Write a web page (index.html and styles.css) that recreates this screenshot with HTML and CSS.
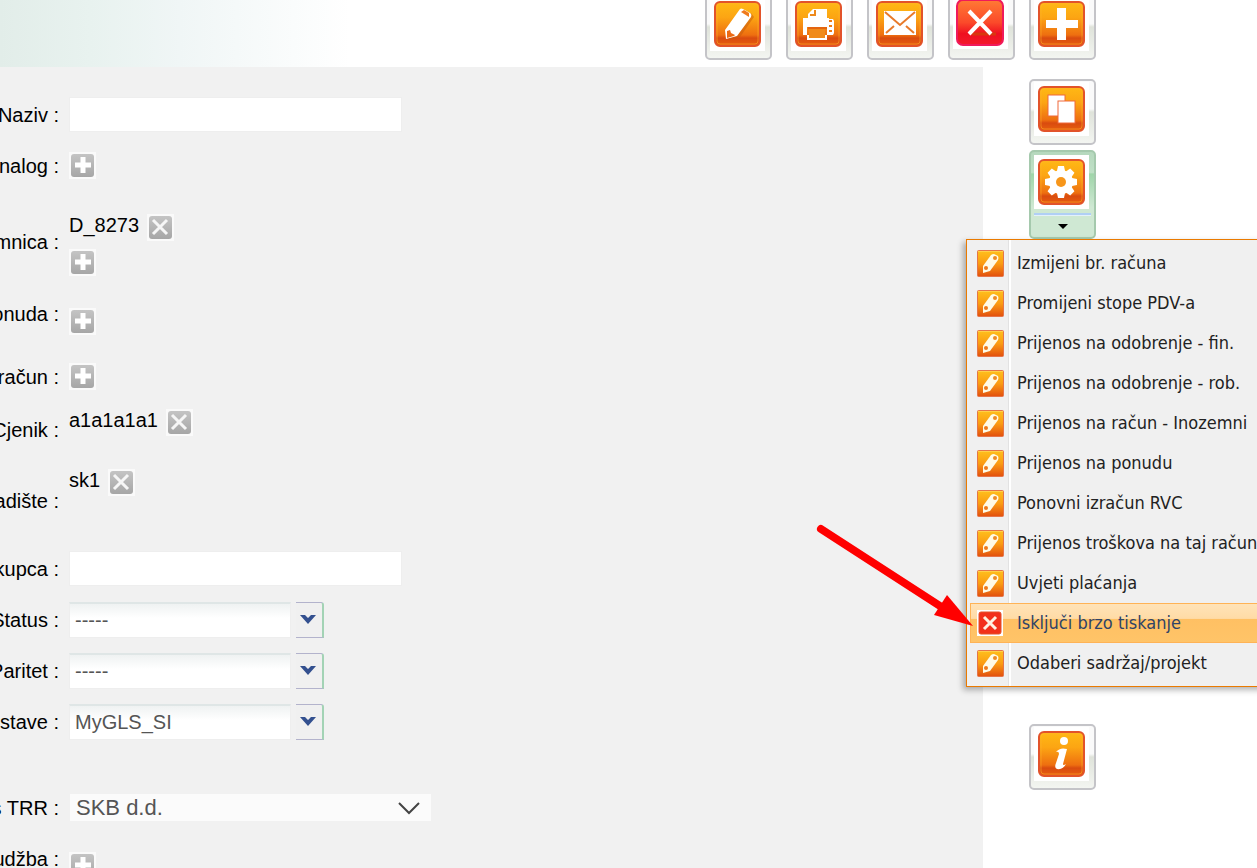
FILE: index.html
```html
<!DOCTYPE html>
<html lang="hr">
<head>
    <meta charset="UTF-8">
    <meta name="viewport" content="width=device-width, initial-scale=1.0">
    <title>Račun</title>
    <link rel="stylesheet" href="styles.css">
</head>
<body>

<svg class="sprite" aria-hidden="true">
    <defs>
        <linearGradient id="orange" x1="0" y1="0" x2="0" y2="1">
            <stop offset="0" stop-color="#ffb914"/>
            <stop offset="0.35" stop-color="#fca513"/>
            <stop offset="0.75" stop-color="#ee6f10"/>
            <stop offset="0.82" stop-color="#d94b0f"/>
            <stop offset="1" stop-color="#e8600f"/>
        </linearGradient>
        <linearGradient id="mini-orange" x1="0" y1="0" x2="0" y2="1">
            <stop offset="0" stop-color="#ffc01c"/>
            <stop offset="0.5" stop-color="#fb9c12"/>
            <stop offset="1" stop-color="#e2500e"/>
        </linearGradient>
        <linearGradient id="red" x1="0" y1="0" x2="0" y2="1">
            <stop offset="0" stop-color="#ff7a35"/>
            <stop offset="0.5" stop-color="#fb4a2a"/>
            <stop offset="0.75" stop-color="#ef1020"/>
            <stop offset="1" stop-color="#f31a2c"/>
        </linearGradient>
        <linearGradient id="gray" x1="0" y1="0" x2="0" y2="1">
            <stop offset="0" stop-color="#c4c4c4"/>
            <stop offset="1" stop-color="#a6a6a6"/>
        </linearGradient>
    </defs>
    <symbol id="tile" viewBox="0 0 55 54">
        <rect width="55" height="54" fill="#fff"/>
        <rect x="5" y="5" width="45" height="44" rx="5" fill="url(#orange)" stroke="#e2532a" stroke-width="2"/>
        <rect x="7" y="7" width="41" height="40" rx="3" fill="none" stroke="#ffb52e" stroke-opacity="0.5"/>
    </symbol>
    <symbol id="pencil" viewBox="0 0 55 54">
        <path d="M18 43 L30 40 L44 20 L41 16 Z" fill="#c65a0c" opacity="0.5"/>
        <path d="M16 42 L15 33 L30 12 Q31 11 33 12 L40 16 Q42 17 41 20 L27 39 Z" fill="#fff"/>
        <path d="M31 15 L34 13 L39 16 L39 20 Z" fill="#ef7a1c"/>
        <path d="M17 34 L20 33 L21 36 L25 38 L24 39 L17 41 Z" fill="#ec6a14"/>
    </symbol>
    <symbol id="mini-pencil" viewBox="0 0 27 27">
        <rect x="0.5" y="0.5" width="26" height="26" rx="1" fill="url(#mini-orange)" stroke="#e5754a"/>
        <path d="M1 1.5 H26" stroke="#ffd04a"/>
        <path d="M6 23 L6 16 L14 5 Q15 4 17 4 L21 6 Q22 8 21 10 L13 21 Z" fill="#fffbe6"/>
        <circle cx="18" cy="8" r="2" fill="#ef8a24"/>
        <circle cx="9" cy="18" r="2" fill="#ef7a1c"/>
    </symbol>
    <symbol id="mini-cross" viewBox="0 0 27 27">
        <rect width="26" height="26" fill="#fff"/>
        <rect x="2" y="2" width="22" height="22" rx="2" fill="#f2301a" stroke="#e2532a"/>
        <path d="M7 7 L19 19 M19 7 L7 19" stroke="#fff0e0" stroke-width="3"/>
    </symbol>
    <symbol id="add" viewBox="0 0 27 27">
        <rect width="27" height="27" fill="#fafafa"/>
        <rect x="2" y="2" width="23" height="23" rx="3" fill="url(#gray)"/>
        <path d="M14 5 V21 M6 13 H22" stroke="#fff" stroke-width="5"/>
    </symbol>
    <symbol id="remove" viewBox="0 0 27 27">
        <rect width="27" height="27" fill="#fafafa"/>
        <rect x="2" y="2" width="23" height="23" rx="3" fill="url(#gray)"/>
        <path d="M6 6 L20 20 M20 6 L6 20" stroke="#f6f6f6" stroke-width="3"/>
    </symbol>
    <symbol id="chevron" viewBox="0 0 16 10">
        <path d="M0 0 H5 L8 3 L11 0 H16 L8 9 Z" fill="#33508f"/>
    </symbol>
</svg>

<header class="header">
    <div class="toolbar">
        <button class="tool" type="button" aria-label="Uredi">
            <svg width="55" height="54"><use href="#tile"/><use href="#pencil"/></svg>
        </button>
        <button class="tool" type="button" aria-label="Ispis">
            <svg width="55" height="54">
                <use href="#tile"/>
                <path d="M17 21 V17 L22 12 H36 V21 Z" fill="#fff"/>
                <path d="M19 18 H24 V13" fill="none" stroke="#ee8a1c" stroke-width="2"/>
                <path d="M12 21 H38 V38 H12 Z M16 30 V43 H36 V30 Z M38 22 H42 L43 24 V36 L42 38 H38 Z" fill="#fff"/>
                <rect x="18" y="31" width="16" height="10" fill="#f08a1a"/>
                <path d="M17 31 H36" stroke="#e4650f" stroke-width="2"/>
                <path d="M38 24 H41 M38 29 H41 M38 34 H41" stroke="#ee7a14" stroke-width="2"/>
            </svg>
        </button>
        <button class="tool" type="button" aria-label="E-mail">
            <svg width="55" height="54">
                <use href="#tile"/>
                <rect x="12" y="14" width="32" height="24" fill="#fff"/>
                <path d="M13 15 L28 28 L43 15 M14 36 L22 29 M42 36 L34 29" fill="none" stroke="#e87a2a" stroke-width="2"/>
            </svg>
        </button>
        <button class="tool" type="button" aria-label="Obriši">
            <svg width="55" height="54">
                <rect width="55" height="52" fill="#fff"/>
                <rect x="4" y="3" width="46" height="45" rx="6" fill="url(#red)" stroke="#f01a5a" stroke-width="2"/>
                <path d="M19 37 H43" stroke="#d8380f" stroke-width="3"/>
                <path d="M16 14 L38 37 M38 14 L16 37" stroke="#fff" stroke-width="4"/>
            </svg>
        </button>
        <button class="tool" type="button" aria-label="Dodaj">
            <svg width="55" height="54">
                <use href="#tile"/>
                <path d="M23 11 H32 V23 H44 V31 H32 V43 H23 V31 H12 V23 H23 Z" fill="#fff"/>
            </svg>
        </button>
    </div>
</header>

<main class="main">
    <form class="panel">
        <div class="row">
            <label for="naziv">Naziv :</label>
            <input class="text" id="naziv" type="text">
        </div>
        <div class="row">
            <span class="label">nalog :</span>
            <button class="icon" type="button" aria-label="Dodaj nalog"><svg width="27" height="27"><use href="#add"/></svg></button>
        </div>
        <div class="row row-double">
            <span class="label">mnica :</span>
            <div class="value">
                <div class="linked">
                    <span>D_8273</span>
                    <button class="icon" type="button" aria-label="Ukloni D_8273"><svg width="27" height="27"><use href="#remove"/></svg></button>
                </div>
                <button class="icon" type="button" aria-label="Dodaj"><svg width="27" height="27"><use href="#add"/></svg></button>
            </div>
        </div>
        <div class="row row-offer">
            <span class="label">onuda :</span>
            <div class="low">
                <button class="icon" type="button" aria-label="Dodaj ponudu"><svg width="27" height="27"><use href="#add"/></svg></button>
            </div>
        </div>
        <div class="row">
            <span class="label">račun :</span>
            <button class="icon" type="button" aria-label="Dodaj račun"><svg width="27" height="27"><use href="#add"/></svg></button>
        </div>
        <div class="row row-price">
            <span class="label">Cjenik :</span>
            <div class="value">
                <div class="linked">
                    <span>a1a1a1a1</span>
                    <button class="icon" type="button" aria-label="Ukloni a1a1a1a1"><svg width="27" height="27"><use href="#remove"/></svg></button>
                </div>
            </div>
        </div>
        <div class="row row-store">
            <span class="label">adište :</span>
            <div class="value">
                <div class="linked">
                    <span>sk1</span>
                    <button class="icon" type="button" aria-label="Ukloni sk1"><svg width="27" height="27"><use href="#remove"/></svg></button>
                </div>
            </div>
        </div>
        <div class="row">
            <label for="kupca">kupca :</label>
            <input class="text" id="kupca" type="text">
        </div>
        <div class="row">
            <label for="status">Status :</label>
            <div class="combo">
                <input id="status" type="text" value="-----">
                <button type="button" aria-label="Otvori"><svg width="16" height="10"><use href="#chevron"/></svg></button>
            </div>
        </div>
        <div class="row">
            <label for="paritet">Paritet :</label>
            <div class="combo">
                <input id="paritet" type="text" value="-----">
                <button type="button" aria-label="Otvori"><svg width="16" height="10"><use href="#chevron"/></svg></button>
            </div>
        </div>
        <div class="row">
            <label for="dostava">stave :</label>
            <div class="combo">
                <input id="dostava" type="text" value="MyGLS_SI">
                <button type="button" aria-label="Otvori"><svg width="16" height="10"><use href="#chevron"/></svg></button>
            </div>
        </div>
        <div class="row row-bank">
            <label for="trr">s TRR :</label>
            <div class="select">
                <select id="trr">
                    <option>SKB d.d.</option>
                </select>
                <svg width="22" height="14"><path d="M1 2 L11 12 L21 2" fill="none" stroke="#444" stroke-width="2"/></svg>
            </div>
        </div>
        <div class="row">
            <span class="label">udžba :</span>
            <div class="low">
                <button class="icon" type="button" aria-label="Dodaj narudžbu"><svg width="27" height="27"><use href="#add"/></svg></button>
            </div>
        </div>
    </form>

    <aside class="side">
        <button class="tool" type="button" aria-label="Kopiraj">
            <svg width="55" height="54">
                <use href="#tile"/>
                <rect x="14" y="13" width="17" height="21" fill="#fff" stroke="#f0683a"/>
                <rect x="24" y="19" width="17" height="22" fill="#fff" stroke="#f0683a"/>
            </svg>
        </button>
        <div class="dropdown">
            <button class="tool tool-open" type="button" aria-label="Radnje" aria-expanded="true">
                <svg width="55" height="54">
                    <use href="#tile"/>
                    <g transform="translate(27 27)" fill="#fff">
                        <circle r="12"/>
                        <path id="tooth" d="M-4 -11 L-3 -16 H3 L4 -11 V11 L3 16 H-3 L-4 11 Z"/>
                        <use href="#tooth" transform="rotate(45)"/>
                        <use href="#tooth" transform="rotate(90)"/>
                        <use href="#tooth" transform="rotate(135)"/>
                        <circle r="5" fill="#f7961a"/>
                    </g>
                </svg>
                <span class="split"></span>
                <svg class="caret" width="10" height="5"><path d="M0 0 H10 L5 5 Z"/></svg>
            </button>
            <div class="menu">
                <button type="button"><svg width="27" height="27"><use href="#mini-pencil"/></svg>Izmijeni br. računa</button>
                <button type="button"><svg width="27" height="27"><use href="#mini-pencil"/></svg>Promijeni stope PDV-a</button>
                <button type="button"><svg width="27" height="27"><use href="#mini-pencil"/></svg>Prijenos na odobrenje - fin.</button>
                <button type="button"><svg width="27" height="27"><use href="#mini-pencil"/></svg>Prijenos na odobrenje - rob.</button>
                <button type="button"><svg width="27" height="27"><use href="#mini-pencil"/></svg>Prijenos na račun - Inozemni</button>
                <button type="button"><svg width="27" height="27"><use href="#mini-pencil"/></svg>Prijenos na ponudu</button>
                <button type="button"><svg width="27" height="27"><use href="#mini-pencil"/></svg>Ponovni izračun RVC</button>
                <button type="button"><svg width="27" height="27"><use href="#mini-pencil"/></svg>Prijenos troškova na taj račun</button>
                <button type="button"><svg width="27" height="27"><use href="#mini-pencil"/></svg>Uvjeti plaćanja</button>
                <button type="button" class="active"><svg width="27" height="27"><use href="#mini-cross"/></svg>Isključi brzo tiskanje</button>
                <button type="button"><svg width="27" height="27"><use href="#mini-pencil"/></svg>Odaberi sadržaj/projekt</button>
                <svg class="arrow" width="160" height="106">
                    <path d="M5 5 L124 82" stroke="#f00" stroke-width="8" stroke-linecap="round"/>
                    <path d="M131 71 L157 102 L118 91 Z" fill="#f00"/>
                </svg>
            </div>
        </div>
        <button class="tool tool-info" type="button" aria-label="Info">
            <svg width="55" height="54">
                <use href="#tile"/>
                <circle cx="30" cy="14" r="4" fill="#fff"/>
                <path d="M22 25 Q26 20 33 22 L29 37 Q29 39 32 37 Q29 43 23 42 Q20 41 22 36 L25 27 Q25 24 22 25 Z" fill="#fff"/>
            </svg>
        </button>
    </aside>
</main>

</body>
</html>
```

FILE: styles.css
```css
* {
    box-sizing: border-box;
}
body {
    font-family: Arial, "Liberation Sans", sans-serif;
    font-size: 20px;
    line-height: 22px;
    color: #000;
    background: #fff;
    margin: 0;
    height: 100vh;
    overflow: hidden;
}
button, input, select {
    font: inherit;
    margin: 0;
}
button {
    cursor: pointer;
}
svg {
    display: block;
    flex: none;
}
.sprite {
    position: absolute;
    width: 0;
    height: 0;
}

/* top bar */
.header {
    height: 67px;
    background: linear-gradient(to right, #e2ede9, #e8f2ef 90px, #f0f6f6 180px, #fff 350px);
}
.toolbar {
    display: flex;
    justify-content: flex-end;
    gap: 14px;
    padding-right: 161px;
    margin-top: -6px;
    float: right;
}
.tool {
    display: block;
    width: 67px;
    height: 66px;
    padding: 1px 2px 3px 3px;
    border: 2px solid #c4c4c8;
    border-radius: 5px;
    background: linear-gradient(#fafafa 45%, #dfe3da 50%, #f3f5f1);
}
.tool > svg {
    margin-bottom: 4px;
}

/* form */
.main {
    display: flex;
}
.panel {
    flex: 1;
    padding-top: 22px;
    background: #f1f1f1;
}
.row {
    display: flex;
    align-items: center;
    gap: 10px;
    height: 51px;
}
.row label, .row .label {
    display: flex;
    justify-content: flex-end;
    width: 59px;
    white-space: nowrap;
}
.row-double {
    height: 70px;
    margin-top: 16px;
}
.row-offer {
    height: 74px;
}
.row-price {
    height: 56px;
}
.row-store {
    height: 85px;
}
.row-bank {
    margin-top: 35px;
}
.value {
    align-self: flex-start;
    padding-top: 7px;
}
.row-store .value {
    padding-top: 11px;
}
.low {
    padding-top: 14px;
}
.linked {
    display: flex;
    gap: 8px;
    margin-bottom: 8px;
}
.icon {
    display: block;
    padding: 0;
    border: 0;
    background: none;
}
.text {
    width: 333px;
    height: 35px;
    padding: 0 6px;
    border: 1px solid #eee;
    background: #fff;
}
.combo {
    display: flex;
    gap: 5px;
    color: #555;
}
.combo input {
    width: 222px;
    height: 36px;
    padding: 0 5px;
    border: 1px solid #eee;
    border-top: 2px solid #dfe6e6;
    color: #555;
    background: linear-gradient(#eff2f2, #fff 14px);
}
.combo button {
    display: flex;
    justify-content: center;
    width: 28px;
    height: 36px;
    padding: 12px 2px 0 0;
    border: 1px solid #b3b3cc;
    border-left: 0;
    border-right: 2px solid #a3d3b5;
    border-top-right-radius: 3px;
    background: #f0f0f0;
}
.select {
    position: relative;
    width: 361px;
    margin-left: 1px;
}
.select select {
    display: block;
    appearance: none;
    width: 100%;
    height: 27px;
    padding: 0 6px;
    border: 0;
    border-radius: 0;
    font-size: 22px;
    color: #555;
    background: #fbfbfb;
}
.select svg {
    position: absolute;
    top: 7px;
    right: 11px;
    pointer-events: none;
}

/* right column */
.side {
    width: 274px;
    padding: 12px 0 78px 46px;
}
.dropdown {
    position: relative;
    width: 67px;
    margin-top: 5px;
}
.tool-open {
    height: 89px;
    border-color: #a5c9ad;
    background: linear-gradient(#b5d8bd, #c0e0c6 24%, #9fd5a9 26%, #cfe8d3 65%);
}
.split {
    display: block;
    width: 57px;
    height: 3px;
    background: #b0cff5;
    border-bottom: 1px solid #e4f0fb;
}
.caret {
    margin: 8px auto 0;
}
.tool-info {
    margin-top: 485px;
}
.menu {
    position: absolute;
    top: 89px;
    left: -63px;
    width: 320px;
    padding: 3px;
    border: 1px solid #ea7a00;
    background: linear-gradient(to right, #f0f0f0 41px, #e2e2e2 41px, #e2e2e2 42px, #fff 42px, #fff 44px, #f0f0f0 44px);
    box-shadow: -3px 3px 6px rgba(0, 0, 0, 0.3);
}
.menu button {
    display: flex;
    align-items: center;
    gap: 13px;
    width: 100%;
    height: 40px;
    padding: 0 6px;
    border: 1px solid transparent;
    font-family: Tahoma, "DejaVu Sans Condensed", "Noto Sans", sans-serif;
    font-size: 18px;
    color: #222;
    white-space: nowrap;
    background: none;
}
.menu .active {
    border-color: #ffb356;
    color: #2f4468;
    background: linear-gradient(#ffe3b8, #ffdba6 38%, #ffc063 40%, #ffc468);
}
.arrow {
    position: absolute;
    top: 284px;
    left: -151px;
    pointer-events: none;
}
```
